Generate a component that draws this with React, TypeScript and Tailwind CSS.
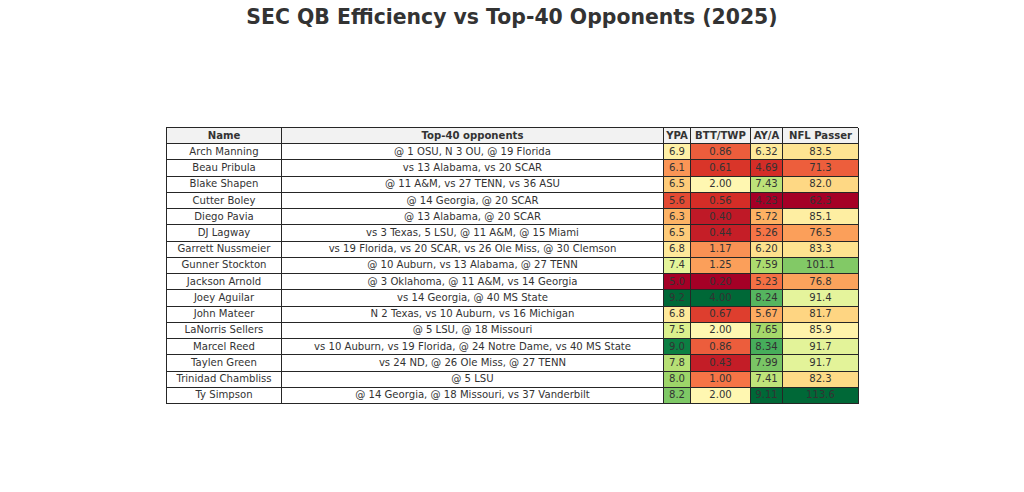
import React from "react";

const RDYLGN = [
  "#a50026", "#d73027", "#f46d43", "#fdae61", "#fee08b", "#ffffbf",
  "#d9ef8b", "#a6d96a", "#66bd63", "#1a9850", "#006837",
];

function hexToRgb(h: string): number[] {
  return [1, 3, 5].map((i) => parseInt(h.slice(i, i + 2), 16));
}

function cmap(t: number): string {
  const x = Math.max(0, Math.min(1, t)) * (RDYLGN.length - 1);
  const i = Math.min(Math.floor(x), RDYLGN.length - 2);
  const f = x - i;
  const a = hexToRgb(RDYLGN[i]);
  const b = hexToRgb(RDYLGN[i + 1]);
  const c = a.map((v, k) => Math.round(v + (b[k] - v) * f));
  return `rgb(${c[0]}, ${c[1]}, ${c[2]})`;
}

type Row = { name: string; opp: string; ypa: number; btt: number; aya: number; nfl: number };

const rows: Row[] = [
  { name: "Arch Manning", opp: "@ 1 OSU, N 3 OU, @ 19 Florida", ypa: 6.9, btt: 0.86, aya: 6.32, nfl: 83.5 },
  { name: "Beau Pribula", opp: "vs 13 Alabama, vs 20 SCAR", ypa: 6.1, btt: 0.61, aya: 4.69, nfl: 71.3 },
  { name: "Blake Shapen", opp: "@ 11 A&M, vs 27 TENN, vs 36 ASU", ypa: 6.5, btt: 2.0, aya: 7.43, nfl: 82.0 },
  { name: "Cutter Boley", opp: "@ 14 Georgia, @ 20 SCAR", ypa: 5.6, btt: 0.56, aya: 4.23, nfl: 62.3 },
  { name: "Diego Pavia", opp: "@ 13 Alabama, @ 20 SCAR", ypa: 6.3, btt: 0.4, aya: 5.72, nfl: 85.1 },
  { name: "DJ Lagway", opp: "vs 3 Texas, 5 LSU, @ 11 A&M, @ 15 Miami", ypa: 6.5, btt: 0.44, aya: 5.26, nfl: 76.5 },
  { name: "Garrett Nussmeier", opp: "vs 19 Florida, vs 20 SCAR, vs 26 Ole Miss, @ 30 Clemson", ypa: 6.8, btt: 1.17, aya: 6.2, nfl: 83.3 },
  { name: "Gunner Stockton", opp: "@ 10 Auburn, vs 13 Alabama, @ 27 TENN", ypa: 7.4, btt: 1.25, aya: 7.59, nfl: 101.1 },
  { name: "Jackson Arnold", opp: "@ 3 Oklahoma, @ 11 A&M, vs 14 Georgia", ypa: 5.0, btt: 0.2, aya: 5.23, nfl: 76.8 },
  { name: "Joey Aguilar", opp: "vs 14 Georgia, @ 40 MS State", ypa: 9.2, btt: 4.0, aya: 8.24, nfl: 91.4 },
  { name: "John Mateer", opp: "N 2 Texas, vs 10 Auburn, vs 16 Michigan", ypa: 6.8, btt: 0.67, aya: 5.67, nfl: 81.7 },
  { name: "LaNorris Sellers", opp: "@ 5 LSU, @ 18 Missouri", ypa: 7.5, btt: 2.0, aya: 7.65, nfl: 85.9 },
  { name: "Marcel Reed", opp: "vs 10 Auburn, vs 19 Florida, @ 24 Notre Dame, vs 40 MS State", ypa: 9.0, btt: 0.86, aya: 8.34, nfl: 91.7 },
  { name: "Taylen Green", opp: "vs 24 ND, @ 26 Ole Miss, @ 27 TENN", ypa: 7.8, btt: 0.43, aya: 7.99, nfl: 91.7 },
  { name: "Trinidad Chambliss", opp: "@ 5 LSU", ypa: 8.0, btt: 1.0, aya: 7.41, nfl: 82.3 },
  { name: "Ty Simpson", opp: "@ 14 Georgia, @ 18 Missouri, vs 37 Vanderbilt", ypa: 8.2, btt: 2.0, aya: 9.11, nfl: 113.6 },
];

function range(key: "ypa" | "btt" | "aya" | "nfl"): [number, number] {
  const v = rows.map((r) => r[key]);
  return [Math.min(...v), Math.max(...v)];
}

const ranges = {
  ypa: range("ypa"),
  btt: range("btt"),
  aya: range("aya"),
  nfl: range("nfl"),
};

function color(key: "ypa" | "btt" | "aya" | "nfl", v: number) {
  const [lo, hi] = ranges[key];
  return cmap((v - lo) / (hi - lo));
}

const cell =
  "border-r border-b border-[#262626] flex items-center justify-center whitespace-nowrap overflow-hidden";

export default function App() {
  return (
    <div
      className="w-[1024px] h-[492px] bg-white text-[#333333] flex flex-col items-center"
      style={{ fontFamily: '"DejaVu Sans", "Liberation Sans", sans-serif' }}
    >
      <div className="pt-[5px] h-[29px] text-[20.4px] leading-[24px] font-bold">
        SEC QB Efficiency vs Top-40 Opponents (2025)
      </div>
      <div className="mt-[98px] w-[692px] border-l border-t border-[#262626] text-[10.1px] leading-none">
        <div className="grid grid-cols-[115px_382px_27px_60px_32px_76px] h-[16.24px] bg-[#f2f2f2] font-bold">
          <div className={cell}>Name</div>
          <div className={cell}>Top-40 opponents</div>
          <div className={cell}>YPA</div>
          <div className={cell}>BTT/TWP</div>
          <div className={cell}>AY/A</div>
          <div className={cell}>NFL Passer</div>
        </div>
        {rows.map((r) => (
          <div
            key={r.name}
            className="grid grid-cols-[115px_382px_27px_60px_32px_76px] h-[16.24px] bg-white"
          >
            <div className={cell}>{r.name}</div>
            <div className={cell}>{r.opp}</div>
            <div className={cell} style={{ backgroundColor: color("ypa", r.ypa) }}>
              {r.ypa.toFixed(1)}
            </div>
            <div className={cell} style={{ backgroundColor: color("btt", r.btt) }}>
              {r.btt.toFixed(2)}
            </div>
            <div className={cell} style={{ backgroundColor: color("aya", r.aya) }}>
              {r.aya.toFixed(2)}
            </div>
            <div className={cell} style={{ backgroundColor: color("nfl", r.nfl) }}>
              {r.nfl.toFixed(1)}
            </div>
          </div>
        ))}
      </div>
    </div>
  );
}
